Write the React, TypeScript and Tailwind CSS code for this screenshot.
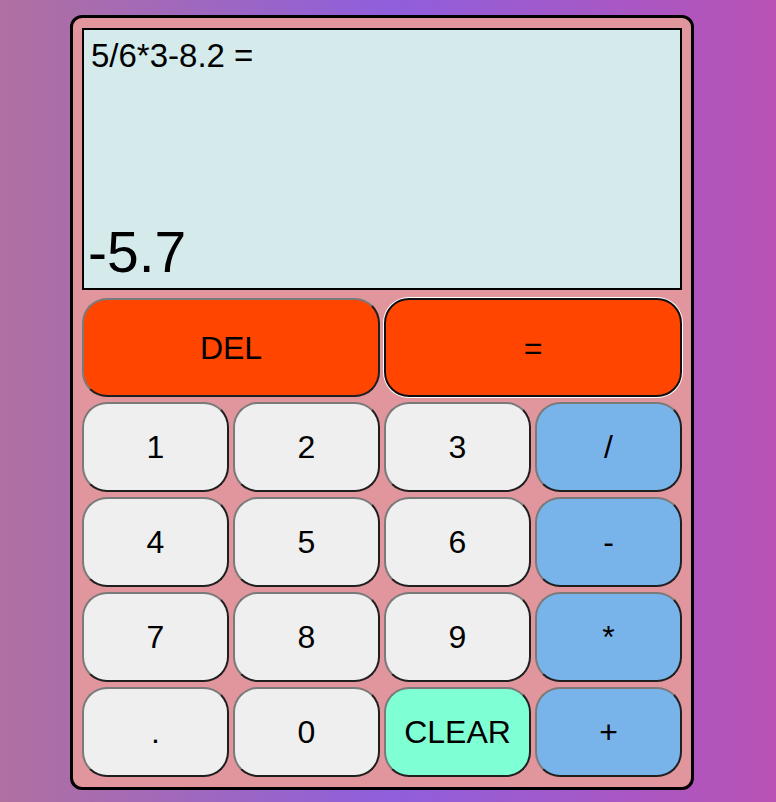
const keyBase =
  "flex items-center justify-center rounded-[25px] border-2 border-t-[#7a7a7a] border-l-[#7a7a7a] border-b-[#1f1f1f] border-r-[#1f1f1f] text-[32px] text-black";

const rows: { label: string; tone: "num" | "op" | "clear" }[][] = [
  [
    { label: "1", tone: "num" },
    { label: "2", tone: "num" },
    { label: "3", tone: "num" },
    { label: "/", tone: "op" },
  ],
  [
    { label: "4", tone: "num" },
    { label: "5", tone: "num" },
    { label: "6", tone: "num" },
    { label: "-", tone: "op" },
  ],
  [
    { label: "7", tone: "num" },
    { label: "8", tone: "num" },
    { label: "9", tone: "num" },
    { label: "*", tone: "op" },
  ],
  [
    { label: ".", tone: "num" },
    { label: "0", tone: "num" },
    { label: "CLEAR", tone: "clear" },
    { label: "+", tone: "op" },
  ],
];

const toneBg = {
  num: "bg-[#efefef]",
  op: "bg-[#78b4ea]",
  clear: "bg-[#7fffd4]",
};

export default function App() {
  return (
    <div
      className="min-h-[802px] w-full bg-[linear-gradient(to_right,#b070a0,#8f5fdc,#b952b4)] pt-[15px]"
      style={{ fontFamily: '"Liberation Sans", Arial, sans-serif' }}
    >
      <div className="ml-[70px] flex w-[624px] flex-col rounded-[12px] border-[3px] border-black bg-[#e0969c] px-[9px] pt-[10px] pb-[10px]">
        <div className="flex h-[262px] flex-col justify-between border-2 border-black bg-[#d4eaeb]">
          <div className="pl-[7px] pt-[7px] text-[33px] leading-[38px] text-black">5/6*3-8.2 =</div>
          <div className="pl-[4px] pb-[3px] text-[57px] leading-[65px] text-black">-5.7</div>
        </div>

        <div className="mt-[8px] grid h-[99px] grid-cols-2 gap-x-[4px]">
          <button className={`${keyBase} bg-[#ff4500]`}>DEL</button>
          <button className="flex items-center justify-center rounded-[25px] border-2 border-[#101010] bg-[#ff4500] text-[32px] text-black shadow-[0_0_0_1px_#ffffff]">
            =
          </button>
        </div>

        {rows.map((row, i) => (
          <div key={i} className="mt-[5px] grid h-[90px] grid-cols-4 gap-x-[4px]">
            {row.map((key) => (
              <button key={key.label} className={`${keyBase} ${toneBg[key.tone]}`}>
                {key.label}
              </button>
            ))}
          </div>
        ))}
      </div>
    </div>
  );
}
